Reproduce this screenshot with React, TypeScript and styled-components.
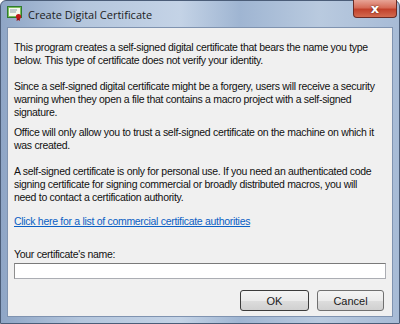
import React from 'react'
import styled, { createGlobalStyle } from 'styled-components'

const GlobalStyle = createGlobalStyle`
  html, body {
    margin: 0;
    padding: 0;
    background: #ffffff;
  }
`

const Frame = styled.div`
  width: 400px;
  height: 324px;
  box-sizing: border-box;
  display: flex;
  flex-direction: column;
  background: linear-gradient(90deg, #8fa6c6 0%, #b4c6dd 20%, #c4d3e6 45%, #9fb5d2 60%, #b9cadf 80%, #a7bbd6 100%);
  border: 1px solid #4b5d78;
  border-radius: 6px 6px 0 0;
  padding: 0 6px 6px 6px;
  font-family: 'Liberation Sans', Arial, sans-serif;
`

const TitleBar = styled.div`
  height: 26px;
  display: flex;
  align-items: flex-start;
  position: relative;
`

const TitleIcon = styled.svg`
  margin: 5px 5px 0 0;
  flex: none;
`

const TitleText = styled.div`
  margin-top: 6px;
  font-family: 'Open Sans', 'DejaVu Sans', sans-serif;
  font-size: 11px;
  color: #1c1c1c;
`

const CloseButton = styled.div`
  position: absolute;
  top: -1px;
  right: -4px;
  width: 44px;
  height: 18px;
  box-sizing: border-box;
  border: 1px solid #6b2b25;
  border-top: none;
  border-radius: 0 0 4px 4px;
  background: linear-gradient(180deg, #e7a496 0%, #d66c58 45%, #c2412b 55%, #d36a4f 100%);
  display: flex;
  align-items: center;
  justify-content: center;
  color: #ffffff;
  font-family: 'DejaVu Sans', sans-serif;
  font-weight: bold;
  font-size: 13px;
  text-shadow: 0 0 2px #4a1a10;
`

const Client = styled.div`
  flex: 1;
  background: #f0f0f0;
  border: 1px solid #7f93b0;
  display: flex;
  flex-direction: column;
  padding: 13px 6px 0 6px;
  color: #111111;
  font-size: 10.5px;
  letter-spacing: -0.3px;
  line-height: 13px;
`

const Para = styled.p<{ $after: number }>`
  margin: 0 0 ${p => p.$after}px 0;
  white-space: nowrap;
`

const Link = styled.a`
  color: #0a5fc4;
  text-decoration: underline;
  margin-bottom: 20px;
`

const Label = styled.div`
  margin-bottom: 2px;
`

const NameInput = styled.input`
  height: 16px;
  box-sizing: border-box;
  margin: 0;
  border: 1px solid #abadb3;
  border-top-color: #7a7a7a;
  border-left-color: #8e8e8e;
  background: #ffffff;
  width: 100%;
`

const ButtonRow = styled.div`
  display: flex;
  justify-content: flex-end;
  gap: 8px;
  margin-top: 11px;
  padding-right: 2px;
`

const Button = styled.button<{ $default?: boolean }>`
  width: ${p => (p.$default ? 69 : 67)}px;
  height: 21px;
  box-sizing: border-box;
  border-radius: 3px;
  border: 1px solid ${p => (p.$default ? '#3c3c3c' : '#707070')};
  background: linear-gradient(180deg, #f4f4f4 0%, #ebebeb 50%, #dddddd 51%, #d0d0d0 100%);
  font-family: 'Liberation Sans', Arial, sans-serif;
  font-size: 11px;
  color: #1a1a1a;
  padding: 0;
`

const CertIcon = () => (
  <TitleIcon width="16" height="15" viewBox="0 0 16 15">
    <rect x="0.5" y="0.5" width="14" height="11" fill="#f4f8ec" stroke="#2f7a2f" />
    <rect x="1.5" y="1.5" width="12" height="9" fill="none" stroke="#7cbf5c" />
    <line x1="3" y1="4" x2="10" y2="4" stroke="#8aa0a8" />
    <line x1="3" y1="6" x2="9" y2="6" stroke="#8aa0a8" />
    <circle cx="11.5" cy="10.5" r="2.6" fill="#c21a1a" />
    <path d="M10 12.5 L9.5 15 L11.3 14 L12.8 15 L12.8 12.5 Z" fill="#9c1010" />
  </TitleIcon>
)

export default function App() {
  return (
    <>
      <GlobalStyle />
      <Frame>
        <TitleBar>
          <CertIcon />
          <TitleText>Create Digital Certificate</TitleText>
          <CloseButton>x</CloseButton>
        </TitleBar>
        <Client>
          <Para $after={13}>
            This program creates a self-signed digital certificate that bears the name you type
            <br />
            below. This type of certificate does not verify your identity.
          </Para>
          <Para $after={7}>
            Since a self-signed digital certificate might be a forgery, users will receive a security
            <br />
            warning when they open a file that contains a macro project with a self-signed
            <br />
            signature.
          </Para>
          <Para $after={13}>
            Office will only allow you to trust a self-signed certificate on the machine on which it
            <br />
            was created.
          </Para>
          <Para $after={11}>
            A self-signed certificate is only for personal use. If you need an authenticated code
            <br />
            signing certificate for signing commercial or broadly distributed macros, you will
            <br />
            need to contact a certification authority.
          </Para>
          <Link href="#">Click here for a list of commercial certificate authorities</Link>
          <Label>Your certificate's name:</Label>
          <NameInput />
          <ButtonRow>
            <Button $default>OK</Button>
            <Button>Cancel</Button>
          </ButtonRow>
        </Client>
      </Frame>
    </>
  )
}
